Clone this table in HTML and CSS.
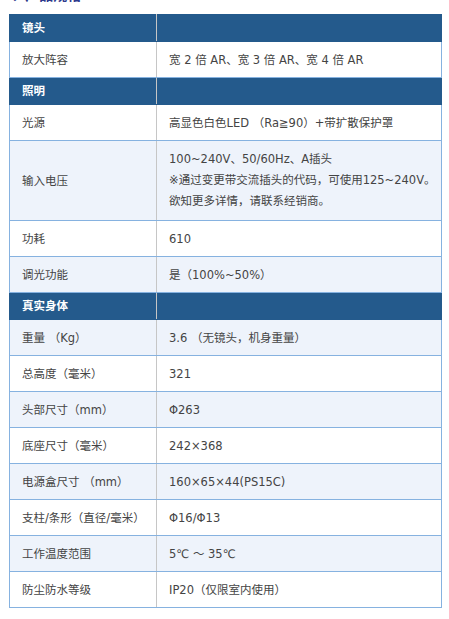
FILE: index.html
```html
<!DOCTYPE html>
<html lang="zh-CN">
<head>
<meta charset="utf-8">
<title>产品规格</title>
<link rel="stylesheet" href="styles.css">
</head>
<body>
<h2 class="title">2、产品规格</h2>
<table class="spec">
  <colgroup><col class="c1"><col class="c2"></colgroup>
  <tbody>
    <tr class="head"><td>镜头</td><td></td></tr>
    <tr><td>放大阵容</td><td>宽 2 倍 AR、宽 3 倍 AR、宽 4 倍 AR</td></tr>
    <tr class="head"><td>照明</td><td></td></tr>
    <tr><td>光源</td><td>高显色白色LED （Ra≧90）+带扩散保护罩</td></tr>
    <tr><td>输入电压</td><td class="multi"><span class="ln">100~240V、50/60Hz、A插头</span><span class="ln">※通过变更带交流插头的代码，可使用125~240V。</span><span class="ln">欲知更多详情，请联系经销商。</span></td></tr>
    <tr><td>功耗</td><td>610</td></tr>
    <tr><td>调光功能</td><td>是（100%~50%）</td></tr>
    <tr class="head"><td>真实身体</td><td></td></tr>
    <tr><td>重量 （Kg）</td><td>3.6 （无镜头，机身重量）</td></tr>
    <tr><td>总高度（毫米）</td><td>321</td></tr>
    <tr><td>头部尺寸（mm）</td><td>Φ263</td></tr>
    <tr><td>底座尺寸（毫米）</td><td>242×368</td></tr>
    <tr><td>电源盒尺寸 （mm）</td><td>160×65×44(PS15C)</td></tr>
    <tr><td>支柱/条形（直径/毫米）</td><td>Φ16/Φ13</td></tr>
    <tr><td>工作温度范围</td><td>5℃ ～ 35℃</td></tr>
    <tr><td>防尘防水等级</td><td>IP20（仅限室内使用）</td></tr>
  </tbody>
</table>
</body>
</html>
```
FILE: styles.css
```css
html, body {
  margin: 0;
  padding: 0;
  background: #ffffff;
}
body {
  padding-left: 9px;
  font-family: "DejaVu Sans", "Noto Sans CJK SC", sans-serif;
  overflow: hidden;
}
.title {
  margin: -15px 0 0 -6px;
  height: 29px;
  font-size: 14px;
  line-height: 18px;
  font-weight: bold;
  color: #2e3a8c;
  font-family: "Noto Sans CJK SC", sans-serif;
}
.spec {
  border-collapse: collapse;
  width: 433px;
  font-size: 11.5px;
  color: #444444;
  table-layout: fixed;
}
.spec .c1 { width: 147px; }
.spec td {
  border-top: 1px solid #86b2e0;
  border-bottom: 1px solid #86b2e0;
  border-left: 1px solid #86b2e0;
  border-right: 1px solid #c6c6c6;
  padding: 0 12px;
  height: 36px;
  line-height: 20px;
  vertical-align: middle;
  box-sizing: border-box;
}
.spec td:last-child {
  border-right: 1px solid #86b2e0;
  border-left: 1px solid #c6c6c6;
  padding-right: 2px;
}
.spec td.multi {
  padding-top: 8px;
  padding-bottom: 8px;
}
.spec .ln {
  display: block;
  height: 21px;
  line-height: 21px;
  white-space: nowrap;
  overflow: hidden;
}
.spec tr:nth-child(odd) td { background: #eef3fb; }
.spec tr:nth-child(even) td { background: #ffffff; }
.spec tr.head td {
  background: #245a8c;
  color: #ffffff;
  font-weight: bold;
  height: 27px;
  border-top: 1px solid #245a8c;
  border-bottom: 1px solid #245a8c;
  border-left-color: #245a8c;
}
.spec tr.head td:last-child {
  border-left: 1px solid #c6c6c6;
  border-right-color: #245a8c;
}
```
